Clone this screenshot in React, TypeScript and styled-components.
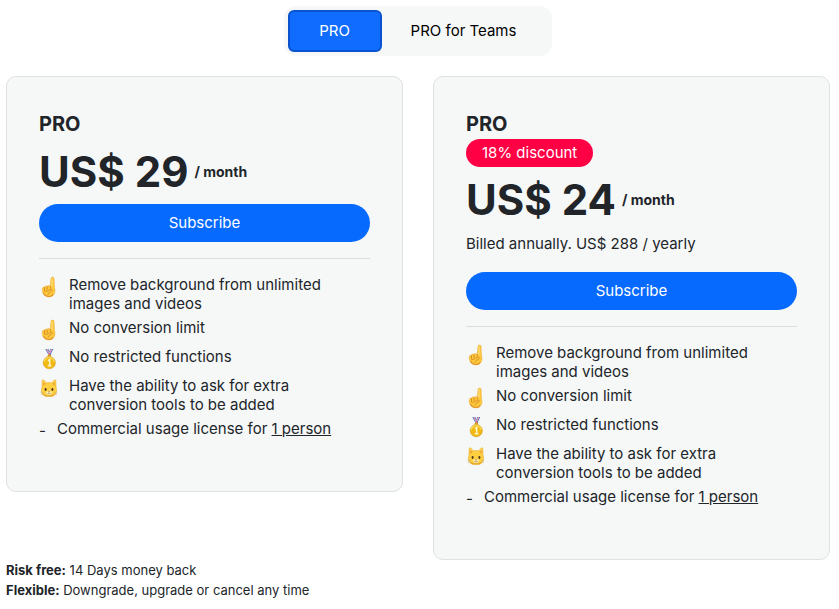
import React, { useState } from "react";
import styled, { createGlobalStyle } from "styled-components";

const GlobalStyle = createGlobalStyle`
  *, *::before, *::after { box-sizing: border-box; }
  body {
    margin: 0;
    background: #fff;
    color: #212529;
    font-family: Inter, "Liberation Sans", sans-serif;
    font-size: 15px;
    line-height: 24px;
  }
  button { font: inherit; cursor: pointer; }
`;

const Page = styled.main`
  padding: 6px 9px 8px 6px;
`;

const Tabs = styled.div`
  display: flex;
  width: fit-content;
  margin: 0 auto 20px;
  padding: 4px;
  gap: 3px;
  border-radius: 12px;
  background: #f6f8f8;
`;

const Tab = styled.button<{ $active: boolean }>`
  height: 42px;
  min-width: 94px;
  padding: 0 24px;
  border: 2px solid ${(p) => (p.$active ? "#0a53ce" : "transparent")};
  border-radius: 6px;
  background: ${(p) => (p.$active ? "#0f6cff" : "transparent")};
  color: ${(p) => (p.$active ? "#fff" : "#000")};

  &:last-child { padding-right: 30px; }
`;

const Plans = styled.div`
  display: grid;
  grid-template-columns: 1fr 1fr;
  align-items: start;
  gap: 30px;
`;

const Card = styled.section`
  padding: 32px;
  border: 1px solid #dee2e2;
  border-radius: 10px;
  background: #f6f8f8;
`;

const PlanName = styled.h2`
  margin: 0;
  font-size: 20px;
  font-weight: 700;
  line-height: 30px;
`;

const Badge = styled.span`
  display: block;
  width: fit-content;
  padding: 0 16px;
  border-radius: 14px;
  background: #ff0045;
  color: #fff;
  line-height: 28px;
`;

const Price = styled.p`
  display: flex;
  align-items: center;
  gap: 6px;
  margin: 0;
  font-size: 42px;
  font-weight: 700;
  line-height: 65px;
`;

const Period = styled.span`
  font-size: 14px;
`;

const Billing = styled.p`
  margin: 0 0 16px;
`;

const Subscribe = styled.button`
  display: block;
  width: 100%;
  height: 38px;
  border: 0;
  border-radius: 19px;
  background: #076aff;
  color: #fff;
`;

const Divider = styled.hr`
  height: 1px;
  margin: 16px 0;
  border: 0;
  background: #d9dddd;
`;

const Features = styled.ul`
  display: grid;
  gap: 5px;
  margin: 0 0 16px;
  padding: 0;
  list-style: none;
`;

const Feature = styled.li<{ $plain?: boolean }>`
  display: flex;
  gap: ${(p) => (p.$plain ? 10 : 12)}px;
  min-height: 24px;
  line-height: 19px;
`;

const Icon = styled.svg`
  flex: none;
  width: 18px;
  height: 24px;
`;

const Dash = styled.span`
  width: 8px;
  line-height: 24px;
`;

const Notes = styled.footer`
  font-size: 13px;
  line-height: 20px;
`;

const Note = styled.p`
  margin: 0;
`;

const PointingHand = () => (
  <Icon viewBox="0 0 18 24" aria-hidden="true">
    <path d="M12 3.5c0-1.9 3-1.9 3.1 0l.3 8.8c.8 2 .9 4.9-.4 6.9-1.8 3-6.6 3.5-9.4 1.1-1.7-1.5-2.6-4-2.4-6 .1-1.6 1-2.4 2.2-2 .3-1.3 1.7-1.7 2.6-.9.8-1.1 2.7-1 3.2.1z" fill="#ffc83d" stroke="#e5a52d" strokeWidth=".5" />
    <path d="M13.2 3.3l-.2 8" stroke="#ffe48e" strokeWidth=".9" strokeLinecap="round" />
    <path d="M5.5 12.6v2.8M8.1 11.9v2.8M11.3 11.7v1.6M5.4 16.1c1.5.7 3 .1 4.3-.8l1.9-.9c1.6-.6 2.3 1 1 1.8l-2.2 1.2c-.8.5-1.2 1.1-1.3 1.8" fill="none" stroke="#c98222" strokeWidth=".8" strokeLinecap="round" />
    <path d="M4.3 18c1.6 3.6 7 4.8 10 1.4" fill="none" stroke="#e09027" strokeWidth="1.1" />
  </Icon>
);

const Medal = () => (
  <Icon viewBox="0 0 18 24" aria-hidden="true">
    <path d="M6.3 2h3l3 6h-2.6z" fill="#3a5fc0" />
    <path d="M7.3 2h1.2l3 6h-1.2z" fill="#fff" />
    <path d="M11.3 2h3L11 8.5H9z" fill="#4668c4" />
    <path d="M12.1 2h1.3l-3.1 6H9.2z" fill="#fff" />
    <path d="M12.5 2h.6L10 8h-.5zM7.7 2h.5l3 6h-.5z" fill="#ed3550" />
    <path d="M9 7.6h2.7l.6 1.8H8.4z" fill="#d49b20" />
    <circle cx="10.3" cy="15.7" r="6.1" fill="#f1b913" stroke="#d49818" strokeWidth=".6" />
    <path d="M5.4 14.8c.8-5.5 9-5.5 9.8 0" fill="none" stroke="#ffe15b" strokeWidth="1.1" />
    <path d="m9 13.8 1.7-1.3v6.2M8.8 18.8h3.5" fill="none" stroke="#fff6c8" strokeWidth="1.5" />
  </Icon>
);

const Cat = () => (
  <Icon viewBox="0 0 18 24" aria-hidden="true">
    <path d="M2.9 11.5 3.2 5c0-1.4.8-1.6 1.7-.7l2.7 2.6c1.5-.5 3.3-.5 4.8 0l2.7-2.6c.9-.9 1.7-.7 1.7.7l.3 6.5c1.6 4.5-.5 8.2-4.2 9H7.1c-3.7-.8-5.8-4.5-4.2-9z" fill="#ffcf42" stroke="#dfa52b" strokeWidth=".5" />
    <path d="m4.2 6.2.1 3.5 2.5-2zm11.6 0-.1 3.5-2.5-2z" fill="#e9a23a" />
    <path d="M3.8 17.5c2.8 2.4 9.6 2.4 12.4 0-.8 1.7-2 2.5-3.4 2.8H7.1c-1.4-.3-2.5-1.1-3.3-2.8z" fill="#e5a62d" />
    <ellipse cx="6.6" cy="13.5" rx="1" ry="1.4" fill="#4e351b" />
    <ellipse cx="13.4" cy="13.5" rx="1" ry="1.4" fill="#4e351b" />
    <ellipse cx="10" cy="17" rx="2.9" ry="1.9" fill="#ffefaa" />
    <path d="M9 15.5h2l-1 1z" fill="#79502a" />
    <path d="M10 16.5v.8m-1.7.2q.9.9 1.7-.2.8 1.1 1.7.2" fill="none" stroke="#8f622a" strokeWidth=".5" />
    <path d="m1.5 16.2 3 .3m-2.8 2 2.8-.6m14-1.7-3 .3m2.8 2-2.8-.6" fill="none" stroke="#bb9860" strokeWidth=".4" />
  </Icon>
);

const features = [
  { icon: PointingHand, text: "Remove background from unlimited images and videos" },
  { icon: PointingHand, text: "No conversion limit" },
  { icon: Medal, text: "No restricted functions" },
  { icon: Cat, text: "Have the ability to ask for extra conversion tools to be added" },
];

interface PlanProps {
  price: number;
  discount?: string;
  billing?: string;
}

function Plan({ price, discount, billing }: PlanProps) {
  return (
    <Card>
      <PlanName>PRO</PlanName>
      {discount && <Badge>{discount}</Badge>}
      <Price>US$ {price}<Period>/ month</Period></Price>
      {billing && <Billing>{billing}</Billing>}
      <Subscribe type="button">Subscribe</Subscribe>
      <Divider />
      <Features>
        {features.map(({ icon: FeatureIcon, text }) => (
          <Feature key={text}><FeatureIcon /><span>{text}</span></Feature>
        ))}
        <Feature $plain>
          <Dash>-</Dash>
          <span>Commercial usage license for <u>1 person</u></span>
        </Feature>
      </Features>
    </Card>
  );
}

export default function App() {
  const [active, setActive] = useState("PRO");
  return (
    <>
      <GlobalStyle />
      <Page>
        <Tabs>
          {["PRO", "PRO for Teams"].map((name) => (
            <Tab key={name} type="button" aria-pressed={active === name} $active={active === name} onClick={() => setActive(name)}>
              {name}
            </Tab>
          ))}
        </Tabs>
        <Plans>
          <Plan price={29} />
          <Plan price={24} discount="18% discount" billing="Billed annually. US$ 288 / yearly" />
        </Plans>
        <Notes>
          <Note><b>Risk free:</b> 14 Days money back</Note>
          <Note><b>Flexible:</b> Downgrade, upgrade or cancel any time</Note>
        </Notes>
      </Page>
    </>
  );
}
